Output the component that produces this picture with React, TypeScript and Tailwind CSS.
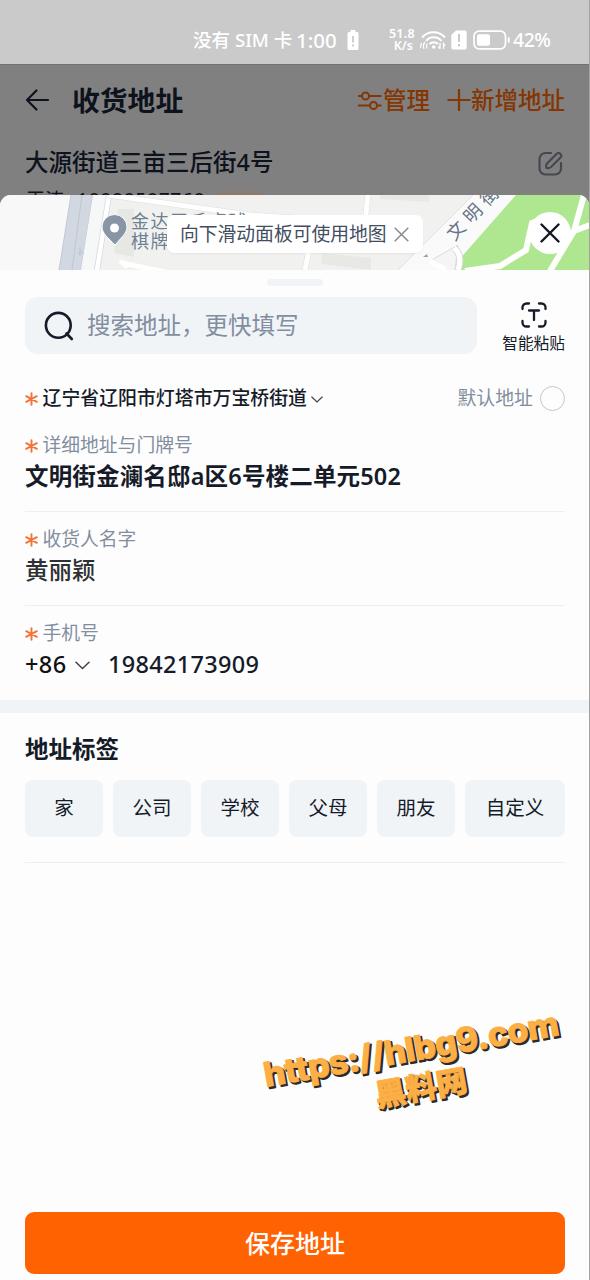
import type { ReactNode } from "react";

function StatusBar() {
  return (
    <div className="relative h-16 shrink-0 bg-[#cacaca] text-white font-medium">
      <div className="flex h-16 items-center pt-4 pl-[193px] whitespace-nowrap">
        <span className="w-[103px] text-[18.6px]">没有 SIM 卡</span>
        <span className="w-[51px] text-[20.5px]">1:00</span>
        <svg width="12" height="20" viewBox="0 0 12 20" className="shrink-0">
          <path d="M3.5 0h5v2H10a1.5 1.5 0 0 1 1.5 1.5v15A1.5 1.5 0 0 1 10 20H2A1.500 1.500 0 0 1 .5 18.500v-15A1.500 1.500 0 0 1 2 2h1.500z" fill="#fff" />
          <path d="M6 6v6.500M6 14.500v2" stroke="#cacaca" strokeWidth="1.800" />
        </svg>
        <div className="ml-[25px] flex w-[31px] flex-col items-end text-[12.500px] leading-[12px] font-semibold">
          <span className="tracking-[0.300px]">51.8</span>
          <span className="mr-[2px]">K/s</span>
        </div>
        <svg width="26" height="20" viewBox="0 0 26 20" className="ml-[5px] shrink-0" fill="none" stroke="#fff" strokeWidth="2">
          <path d="M2 7.500c6-7 17-7 23 0M6 11c4-5 11.500-5 15.500 0M9.500 14c2.500-2.500 6-2.500 8.500 0" />
          <circle cx="13.700" cy="17" r="1.800" fill="#fff" stroke="none" />
          <path d="M1 18q-1-3 1-5M4 19q-1.500-4 1-7M7 18.500q-1-3 .5-5" strokeWidth="1.200" />
          <path d="M20 13v5.500M18.300 16.500l1.700 2.500M23.500 19v-5.500l1.700 2.500" strokeWidth="1.300" />
        </svg>
        <svg width="16" height="20" viewBox="0 0 16 20" className="ml-[5px] shrink-0">
          <path d="M5 .5h9A1.700 1.700 0 0 1 15.700 2.200v15.600A1.700 1.700 0 0 1 14 19.500H2A1.700 1.700 0 0 1 .3 17.800V5z" fill="#fff" />
          <path d="M8 4v8M8 14v2.500" stroke="#cacaca" strokeWidth="2" />
        </svg>
        <svg width="38" height="20" viewBox="0 0 38 20" className="ml-[6px] shrink-0">
          <rect x="1" y="1.200" width="31.500" height="17.600" rx="5" fill="none" stroke="#fff" strokeWidth="1.700" />
          <rect x="4" y="4.300" width="13" height="11.400" rx="2" fill="#fff" />
          <path d="M35.800 7.500v5" stroke="#fff" strokeWidth="2" />
        </svg>
        <span className="ml-[2px] text-[19.500px] tracking-[-0.500px]">42%</span>
      </div>
    </div>
  );
}

function DimmedPage() {
  return (
    <div className="h-[131px] shrink-0 overflow-hidden border-t border-[#727272] bg-[#808080] text-[#0d121d]">
      <div className="flex h-[70px] items-center pr-[24px] pl-[25px]">
        <svg width="26" height="24" viewBox="0 0 26 24" fill="none" stroke="#0d121d" strokeWidth="2.200" strokeLinecap="round" strokeLinejoin="round">
          <path d="M23 12H2M11.500 2.500L2 12l9.500 9.500" />
        </svg>
        <h1 className="mt-[1px] ml-[21px] text-[27.800px] font-semibold">收货地址</h1>
        <div className="mt-[2px] ml-auto flex items-center text-[23.500px] font-medium text-[#853602]">
          <svg width="25" height="20" viewBox="0 0 25 20" fill="none" stroke="#853602" strokeWidth="2" className="mr-[1px]">
            <path d="M1 5h4M12 5h12.500M1 14.500h12M20 14.500h4.500" />
            <circle cx="8.500" cy="5" r="3.500" />
            <circle cx="16.500" cy="14.500" r="3.500" />
          </svg>
          <span>管理</span>
          <svg width="24" height="24" viewBox="0 0 24 24" stroke="#853602" strokeWidth="2.200" className="mb-[2px] ml-[17px]">
            <path d="M0.500 12h23M12 1v22" />
          </svg>
          <span>新增地址</span>
        </div>
      </div>
      <div className="flex h-[54px] items-center justify-between pr-[26px] pl-[25px]">
        <span className="text-[23.500px] leading-[54px] font-medium">大源街道三亩三后街4号</span>
        <svg width="25" height="25" viewBox="0 0 25 25" fill="none" stroke="#444850" strokeWidth="2.200" strokeLinecap="round" className="mt-[3px]">
          <path d="M13 2H7.500A6 6 0 0 0 1.500 8v9.500a6 6 0 0 0 6 6H17a6 6 0 0 0 6-6V12" />
          <path d="M9 12.500L18.500 3a2.500 2.500 0 0 1 4 3.500L13 16c-1.500 1.300-3 1.300-4.500 1-.6-1.500-.6-3 .5-4.500z" />
        </svg>
      </div>
      <div className="flex h-[30px] items-start pl-[26px] text-[19px] leading-[23px]">
        <span className="w-[51px]">王涛</span>
        <span className="tracking-[0.800px]">18888587768</span>
        <span className="mt-[2px] ml-[12px] h-6 w-[45px] rounded bg-[#8a7a70]" />
      </div>
    </div>
  );
}

function MapStrip() {
  return (
    <div className="relative h-[75px] shrink-0 overflow-hidden rounded-t-[11px] bg-[#f7f7f7]">
      <svg width="590" height="75" viewBox="0 0 590 75" className="block">
        <path d="M92 0H590V75H92z" fill="#f1f2f0" />
        <path d="M0 0H76L64 75H0z" fill="#f8f8f8" />
        <path d="M71 0L93 0L81 75L59 75z" fill="#d2d8e1" />
        <path d="M71 0L59 75M82 0L72 75M93 0L81 75" stroke="#bbc2cd" strokeWidth="0.800" />
        <path d="M93 0H109L97 75H81z" fill="#f6f7f7" />
        <path d="M109 0L97 75" stroke="#d6d8dc" strokeWidth="6" />
        <path d="M109 0L97 75" stroke="#fff" strokeWidth="4.500" />
        <path d="M118 14H134V62L114 58z" fill="#e7e7e3" />
        <path d="M80 52v9M78 59l3-3 2 3" stroke="#bbc2cd" fill="none" />
        <path d="M108 0L250 20L370 28" stroke="#dcdee0" strokeWidth="6" fill="none" />
        <path d="M108 0L250 20L370 28" stroke="#fff" strokeWidth="5" fill="none" />
        <path d="M122 68L170 78M128 72L120 66" stroke="#fff" strokeWidth="5" />
        <path d="M368 0L365 28M309 55L305 75" stroke="#dcdee0" strokeWidth="6" />
        <path d="M368 0L365 28M309 55L305 75" stroke="#fff" strokeWidth="5" />
        <path d="M380 0H429V7L380 4zM322 58L371 63V75L321 69z" fill="#e8e8e4" />
        <path d="M473 0H517L450 75H398z" fill="#fafafa" />
        <path d="M473 0L398 75" stroke="#dcdee1" />
        <path d="M516 0H590V75H450z" fill="#afe690" />
        <path d="M455 75L458 50L430 66L443 75" stroke="#d9dbdf" fill="#f5f5f5" />
        <path d="M454 53Q463 60 458 75" stroke="#d9dbdf" strokeWidth="7" fill="none" />
        <path d="M454 53Q463 60 458 75M430 66L446 75" stroke="#fff" strokeWidth="5" fill="none" />
        <path d="M465 76L500 71L526 55L532 28L552 20M584 0L574 36L550 76M574 36L590 30" stroke="#fff" strokeWidth="6" fill="none" />
        <path d="M115 50C108 43 102 38 102 32a12.500 12.500 0 0 1 25 0c0 6-6 11-12 18z" fill="#8795a5" stroke="#fff" strokeWidth="1" />
        <circle cx="114.500" cy="33" r="4.500" fill="#fff" />
        <path d="M423 62l4-3 1 3z" fill="#999da5" />
      </svg>
      <div className="absolute top-[16px] left-[131px] text-[18px] leading-[20px] tracking-[1.500px] whitespace-nowrap text-[#6d7f91]">
        金达王毛桌球
        <br />
        棋牌
      </div>
      <div className="absolute top-[0px] left-[436px] w-[88px] -rotate-[46deg] text-[18px] leading-[20px] tracking-[6px] whitespace-nowrap text-[#667386]">
        文明街
      </div>
      <div className="absolute top-[20px] left-[167px] flex h-[38px] w-[256px] items-center rounded-[7px] bg-white pl-[13px] text-[18.800px] whitespace-nowrap text-[#434d60] shadow-xs">
        <span>向下滑动面板可使用地图</span>
        <svg width="15" height="15" viewBox="0 0 15 15" stroke="#888b8f" strokeWidth="1.500" className="ml-[7px] shrink-0">
          <path d="M.7.7l13.600 13.600M14.300.7L.7 14.300" />
        </svg>
      </div>
      <div className="absolute top-[17px] left-[529px] flex h-[42px] w-[42px] items-center justify-center rounded-full bg-white">
        <svg width="20" height="20" viewBox="0 0 20 20" stroke="#111724" strokeWidth="2.400" strokeLinecap="round">
          <path d="M1.500 1.500l17 17M18.500 1.500l-17 17" />
        </svg>
      </div>
    </div>
  );
}

function Asterisk() {
  return (
    <svg width="13" height="14" viewBox="0 0 13 14" stroke="#f27335" strokeWidth="1.900" strokeLinecap="round" className="mt-[2px] mr-[4.500px] shrink-0">
      <path d="M6.500 1.300v11.400M1.200 4.200l10.600 5.600M11.800 4.200L1.200 9.800" />
    </svg>
  );
}

function Chevron({ className, width }: { className: string; width: number }) {
  return (
    <svg width={width} height={width * 0.6} viewBox="0 0 15 9" fill="none" stroke="#3c424d" strokeWidth="1.500" strokeLinecap="round" className={className}>
      <path d="M1 1.300l6.500 6.200L14 1.300" />
    </svg>
  );
}

function Field({ label, children }: { label: string; children: ReactNode }) {
  return (
    <div className="mr-[24px] ml-[25px] h-[94px] shrink-0 border-b border-[#eeeff1] pt-[14px] last:border-b-0">
      <div className="flex h-[26px] items-center text-[18.800px] leading-[26px] text-[#828e9f]">
        <Asterisk />
        {label}
      </div>
      <div className="flex h-[37px] items-center text-[23.500px] leading-[37px] whitespace-nowrap">{children}</div>
    </div>
  );
}

const TAGS = ["家", "公司", "学校", "父母", "朋友"];

function Watermark() {
  return (
    <svg width="320" height="125" viewBox="0 0 320 125" className="pointer-events-none absolute top-[1000px] left-[250px]">
      <g transform="translate(16 87) rotate(-10)" fontWeight="800" strokeLinejoin="round">
        <g fill="#2e2a26" stroke="#2e2a26" strokeWidth="1.600" transform="translate(1.500 2)">
          <text x="0" y="0" fontSize="34" textLength="299" fontFamily="Inter, sans-serif">https://hlbg9.com</text>
          <text x="106" y="39" fontSize="31" textLength="93" fontFamily="Noto Sans CJK SC, sans-serif">黑料网</text>
        </g>
        <g fill="#fcaf45" stroke="#fcaf45" strokeWidth="0.800">
          <text x="0" y="0" fontSize="34" textLength="299" fontFamily="Inter, sans-serif">https://hlbg9.com</text>
          <text x="106" y="39" fontSize="31" textLength="93" fontFamily="Noto Sans CJK SC, sans-serif">黑料网</text>
        </g>
      </g>
    </svg>
  );
}

export default function App() {
  return (
    <div className="relative flex h-[1280px] w-[590px] flex-col overflow-hidden border-r border-[#a3a3a3] bg-[#fdfdfd] font-['Noto_Sans','Noto_Sans_CJK_SC',sans-serif] text-[#151b28]">
      <StatusBar />
      <DimmedPage />
      <div className="shrink-0 bg-[#808080]">
        <MapStrip />
      </div>
      <div className="flex h-[27px] shrink-0 justify-center pt-[9px]">
        <div className="h-[7px] w-[56px] rounded-full bg-[#f0f3f7]" />
      </div>

      <div className="flex h-[57px] shrink-0 items-center justify-between pr-[24px] pl-[25px]">
        <div className="flex h-[57px] w-[452px] items-center rounded-[13px] bg-[#f0f4f7] pl-[19px] text-[23.500px] text-[#828e9f]">
          <svg width="30" height="30" viewBox="0 0 30 30" fill="none" stroke="#151b28" strokeWidth="2.600" strokeLinecap="round" className="mr-[13px]">
            <circle cx="14.300" cy="14.300" r="12.400" />
            <path d="M22.500 22.500l5.300 5.500" />
          </svg>
          搜索地址，更快填写
        </div>
        <div className="flex flex-col items-center text-[15.700px] leading-[24px]">
          <svg width="26" height="26" viewBox="0 0 26 26" fill="none" stroke="#151b28" strokeWidth="2.300" strokeLinecap="round" className="mt-[5px] mb-[3px]">
            <path d="M1.500 7V5.500a4 4 0 0 1 4-4H8M18 1.500h2.500a4 4 0 0 1 4 4V7M24.500 19v1.500a4 4 0 0 1-4 4H18M8 24.500H5.500a4 4 0 0 1-4-4V19M8 8.500h10M13 8.500V18" />
          </svg>
          智能粘贴
        </div>
      </div>

      <div className="flex h-[63px] shrink-0 items-center pt-[25px] pr-[24px] pl-[25px] text-[18.900px]">
        <Asterisk />
        <span className="font-medium">辽宁省辽阳市灯塔市万宝桥街道</span>
        <Chevron width={12} className="mt-[3px] ml-[4px]" />
        <span className="ml-auto text-[#828e9f]">默认地址</span>
        <span className="ml-[7px] h-[25px] w-[25px] rounded-full border-[1.500px] border-[#c4c6c9]" />
      </div>

      <div className="flex h-[283px] shrink-0 flex-col pt-px">
        <Field label="详细地址与门牌号">
          <span className="font-semibold tracking-[0.170px]">文明街金澜名邸a区6号楼二单元502</span>
        </Field>
        <Field label="收货人名字">
          <span className="font-medium text-[#2f3033]">黄丽颖</span>
        </Field>
        <Field label="手机号">
          <span className="w-[50px] font-medium tracking-[0.400px] text-[#111]">+86</span>
          <Chevron width={15} className="mt-[2px]" />
          <span className="ml-[18px] font-medium tracking-[0.300px]">19842173909</span>
        </Field>
      </div>

      <div className="h-[13px] shrink-0 bg-[#f0f4f7]" />

      <div className="mr-[24px] ml-[25px] flex h-[150px] shrink-0 flex-col border-b border-[#eeeff1] pt-[16px]">
        <h2 className="h-[51px] text-[23.500px] leading-[41px] font-bold">地址标签</h2>
        <div className="flex gap-[10px] text-[19.500px]">
          {TAGS.map((tag) => (
            <button key={tag} className="h-[57px] w-[78px] rounded-[8px] bg-[#f0f4f7] pb-[2px]">
              {tag}
            </button>
          ))}
          <button className="h-[57px] w-[100px] rounded-[8px] bg-[#f0f4f7] pb-[2px]">自定义</button>
        </div>
      </div>

      <div className="mt-auto shrink-0 pr-[24px] pb-[6px] pl-[25px]">
        <button className="h-[62px] w-full rounded-[9px] bg-[#ff6200] pt-px text-[25px] font-medium text-white">保存地址</button>
      </div>
      <Watermark />
    </div>
  );
}
